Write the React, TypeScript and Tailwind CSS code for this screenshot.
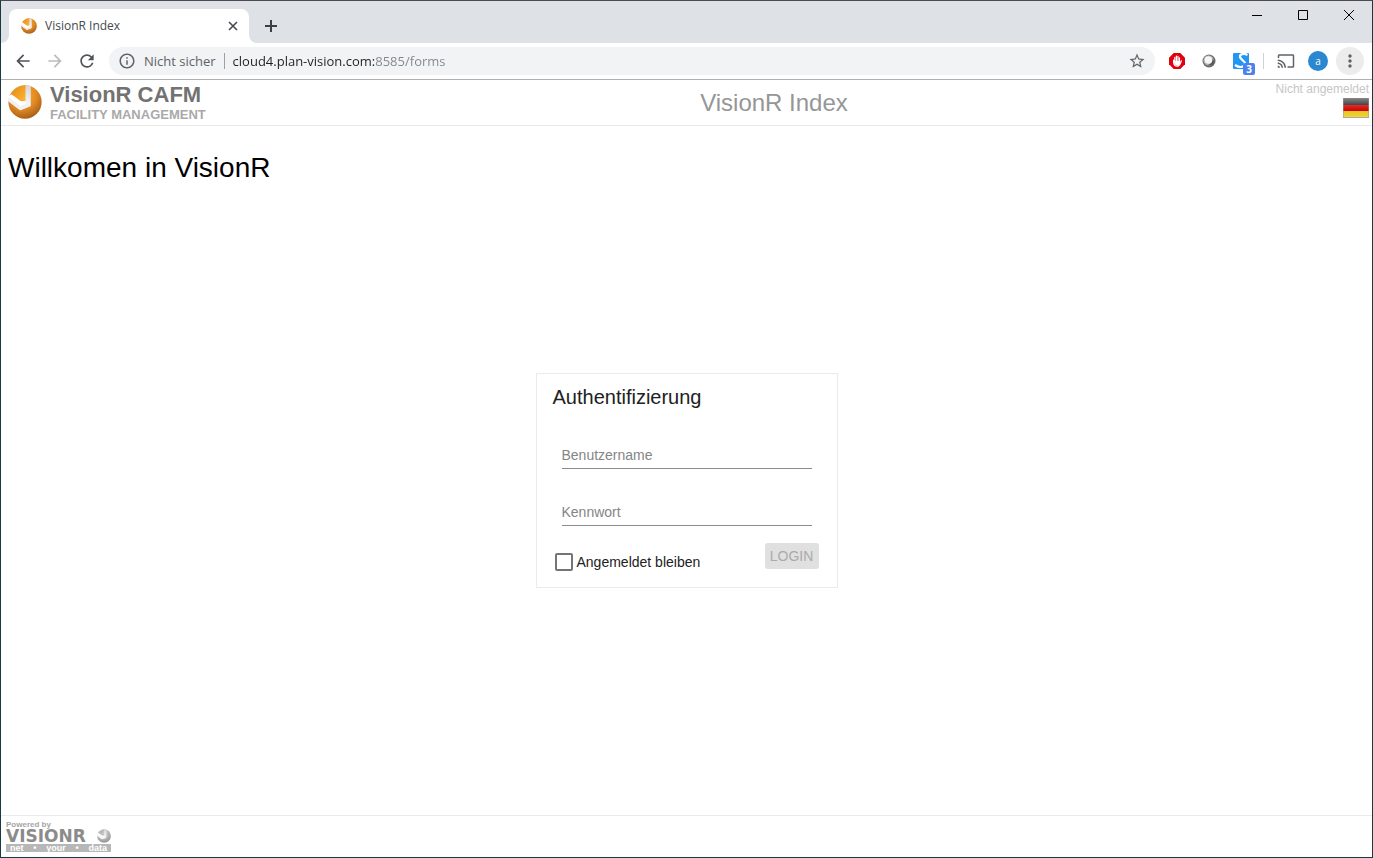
import { useState } from "react";
import { MdArrowBack, MdArrowForward, MdRefresh, MdInfoOutline, MdStarBorder, MdCast, MdMoreVert } from "react-icons/md";

function Sphere({ id, className, gray = false }: { id: string; className: string; gray?: boolean }) {
  const shades = gray ? ["#e2e2e2", "#b5b5b5", "#8f8f8f"] : ["#ffac2a", "#e28b22", "#a1591a"];
  return (
    <svg viewBox="0 0 100 100" className={className} aria-hidden="true">
      <defs>
        <radialGradient id={id} cx="0.42" cy="0.3" r="0.75">
          <stop offset="0" stopColor={shades[0]} />
          <stop offset="0.55" stopColor={shades[1]} />
          <stop offset="1" stopColor={shades[2]} />
        </radialGradient>
        <linearGradient id={id + "-band"} x1="0" y1="0" x2="0" y2="1">
          <stop offset="0" stopColor="#d6d4dc" />
          <stop offset="1" stopColor="#f8f8fb" />
        </linearGradient>
        <linearGradient id={id + "-wedge"} x1="0" y1="0" x2="1" y2="1">
          <stop offset="0" stopColor={gray ? "#a8a8a8" : "#e08a1c"} />
          <stop offset="1" stopColor={gray ? "#cfcfcf" : "#ffb52e"} />
        </linearGradient>
      </defs>
      <circle cx="50" cy="50" r="49" fill={`url(#${id})`} />
      <path d="M51 0 L67 3 L67 62 L50 58Z" fill={`url(#${id}-band)`} />
      <path d="M0 32 L11 28 L40 48 L51 46 L52 60 L67 62 L36 74 L1 48Z" fill="#ffffff" />
      <path d="M2 36 L36 62 L52 56 L67 62 L36 74 L1 48Z" fill="#f1f0f4" />
      <path d="M11 26 Q26 5 51 1 L51 46 Q42 43 35 46Z" fill={`url(#${id}-wedge)`} />
    </svg>
  );
}

function TabStrip() {
  return (
    <div className="flex h-[42px] items-end justify-between bg-[#dee1e6]">
      <div className="flex items-end">
        <svg viewBox="0 0 8 8" className="size-2" aria-hidden="true">
          <path d="M8 0V8H0A8 8 0 0 0 8 0Z" fill="#fff" />
        </svg>
        <div className="flex h-[34px] w-60 items-center rounded-t-lg bg-white pl-3 pr-2">
          <Sphere id="tab-icon" className="size-4" />
          <span className="ml-2 flex-1 font-['Open_Sans','Noto_Sans',sans-serif] text-[12px] text-[#45494d]">VisionR Index</span>
          <button aria-label="Tab schließen" className="flex size-4 items-center justify-center">
            <svg viewBox="0 0 10 10" className="size-[10px]"><path d="M1 1L9 9M9 1L1 9" stroke="#45494d" strokeWidth="1.6" /></svg>
          </button>
        </div>
        <svg viewBox="0 0 8 8" className="size-2" aria-hidden="true">
          <path d="M0 0V8H8A8 8 0 0 1 0 0Z" fill="#fff" />
        </svg>
        <button aria-label="Neuer Tab" className="flex h-[34px] w-7 items-center justify-center">
          <svg viewBox="0 0 12 12" className="size-3"><path d="M6 0V12M0 6H12" stroke="#3c4043" strokeWidth="2" /></svg>
        </button>
      </div>
      <div className="flex h-7 self-start">
        <button aria-label="Minimieren" className="flex w-[46px] items-center justify-center">
          <svg viewBox="0 0 10 10" className="size-[10px]"><path d="M0 5.5H10" stroke="#000" /></svg>
        </button>
        <button aria-label="Maximieren" className="flex w-[46px] items-center justify-center">
          <svg viewBox="0 0 10 10" className="size-[10px]"><path d="M.5 .5H9.5V9.5H.5Z" fill="none" stroke="#000" /></svg>
        </button>
        <button aria-label="Schließen" className="flex w-[46px] items-center justify-center">
          <svg viewBox="0 0 10 10" className="size-[10px]"><path d="M0 0L10 10M10 0L0 10" stroke="#000" /></svg>
        </button>
      </div>
    </div>
  );
}

function Toolbar() {
  const [url, setUrl] = useState("cloud4.plan-vision.com:8585/forms");
  return (
    <div className="flex h-[37px] items-center border-b border-[#aeb0b2] bg-white pl-3 pr-2 font-['Open_Sans','Noto_Sans',sans-serif]">
      <div className="flex gap-3 text-[20px]">
        <button aria-label="Zurück" className="text-[#505357]"><MdArrowBack /></button>
        <button aria-label="Vorwärts" className="text-[#babcbe]"><MdArrowForward /></button>
        <button aria-label="Neu laden" className="text-[#505357]"><MdRefresh /></button>
      </div>
      <div className="ml-3 flex h-7 flex-1 items-center rounded-full bg-[#f1f3f4] pl-[9px] pr-[9px] text-[13px]">
        <button className="flex items-center gap-2 text-[#5f6368]">
          <MdInfoOutline className="text-[18px]" />
          <span className="whitespace-nowrap pt-0.5">Nicht sicher</span>
        </button>
        <span className="ml-2 h-4 w-px bg-[#9aa0a6]" />
        <input
          aria-label="Adresse"
          value={url}
          onChange={(e) => setUrl(e.target.value)}
          className="ml-2 min-w-0 flex-1 bg-[linear-gradient(to_right,#202124_142px,#80868b_142px)] bg-clip-text pt-0.5 text-transparent caret-black outline-none"
        />
        <button aria-label="Lesezeichen" className="text-[18px] text-[#5f6368]"><MdStarBorder /></button>
      </div>
      <div className="ml-3 flex items-center gap-4">
        <button aria-label="Werbeblocker">
          <svg viewBox="0 0 16 16" className="ml-0.5 size-4">
            <path d="M4.7 0H11.3L16 4.7V11.3L11.3 16H4.7L0 11.3V4.7Z" fill="#e1000f" />
            <path d="M4.6 7V9.6C5 12 6.2 13.2 8 13.2C9.8 13.2 10.8 12 11.5 10L12.4 7.8M5.8 9V4.4M7.4 8V3M9 8V3.4M10.5 9V4.8" fill="none" stroke="#fff" strokeWidth="1.2" strokeLinecap="round" />
            <path d="M5.2 8H11V10.6L9.5 12.5H7L5.2 10.5Z" fill="#fff" />
          </svg>
        </button>
        <button aria-label="Erweiterung">
          <svg viewBox="0 0 16 16" className="size-4">
            <circle cx="8" cy="8" r="6.5" fill="#6a6a6a" />
            <circle cx="7.6" cy="7.4" r="5.2" fill="#b0b0b0" />
            <circle cx="7.4" cy="7" r="3.8" fill="#f6f6f6" />
            <path d="M11.6 6Q12 10.5 7 12Q11.5 13.2 13 8.8Q13 7 11.6 6Z" fill="#505050" />
          </svg>
        </button>
        <button aria-label="Übersetzer">
          <svg viewBox="0 0 22 28" className="h-7 w-[22px]">
            <rect y="6" width="16" height="16" rx="1" fill="#2196f3" />
            <path d="M14.5 8C11 6 6.500 7 7 10C7.500 13 12.500 13.500 12 17C11.500 20.500 6 21 2 18" fill="none" stroke="#fff" strokeWidth="2.200" />
            <rect x="10" y="16" width="12" height="12" rx="2" fill="#4d82ee" />
            <text x="16" y="25.500" textAnchor="middle" fill="#fff" fontSize="10" fontWeight="700" fontFamily="Open Sans, sans-serif">3</text>
          </svg>
        </button>
      </div>
      <span className="ml-2 h-4 w-px bg-[#cfd1d4]" />
      <button aria-label="Streamen" className="ml-[13px] text-[18px] text-[#5f6368]"><MdCast /></button>
      <button aria-label="Profil" className="ml-[13px] flex size-5 items-center justify-center rounded-full bg-[#2a87d0] text-[10px] text-white">a</button>
      <button aria-label="Menü" className="ml-2 flex size-7 items-center justify-center rounded-full bg-[#ececec] text-[20px] text-[#5f6368]"><MdMoreVert /></button>
    </div>
  );
}

function AppHeader() {
  return (
    <header className="flex h-[46px] items-start border-b border-[#eaeaea] px-[3px]">
      <div className="flex w-[201px] shrink-0 items-start gap-2 pl-1 pt-[3px]">
        <Sphere id="brand-icon" className="mt-0.5 size-[34px] shrink-0" />
        <div className="whitespace-nowrap font-bold">
          <div className="text-[22px] leading-6 text-[#727272]">VisionR CAFM</div>
          <div className="text-[13px] leading-4 text-[#a9a9a9]">FACILITY MANAGEMENT</div>
        </div>
      </div>
      <h1 className="flex-1 self-center text-center text-[24px] text-[#969696]">VisionR Index</h1>
      <div className="flex w-[26px] shrink-0 flex-col items-end">
        <span className="whitespace-nowrap text-[12px] leading-[18px] text-[#c6c6c6]">Nicht angemeldet</span>
        <button aria-label="Sprache: Deutsch">
          <svg viewBox="0 0 26 20" className="h-5 w-[26px]">
            <defs>
              <linearGradient id="flag-black" x1="0" y1="0" x2="0" y2="1"><stop offset="0" stopColor="#888" /><stop offset="1" stopColor="#444" /></linearGradient>
              <linearGradient id="flag-red" x1="0" y1="0" x2="0" y2="1"><stop offset="0" stopColor="#e32b2b" /><stop offset="1" stopColor="#c80000" /></linearGradient>
              <linearGradient id="flag-gold" x1="0" y1="0" x2="0" y2="1"><stop offset="0" stopColor="#e8c61c" /><stop offset="1" stopColor="#f0d535" /></linearGradient>
            </defs>
            <rect width="26" height="7" fill="url(#flag-black)" />
            <rect y="7" width="26" height="6" fill="url(#flag-red)" />
            <rect y="13" width="26" height="6" fill="url(#flag-gold)" />
            <path d="M0 19.5H26" stroke="#aaa" />
            <path d="M.5 0V20M25.5 0V20" stroke="#999" strokeOpacity=".5" />
          </svg>
        </button>
      </div>
    </header>
  );
}

function LoginForm() {
  return (
    <form className="w-[302px] border border-[#ebebeb] pb-4 pl-4 pr-[18px] pt-2" onSubmit={(e) => e.preventDefault()}>
      <h3 className="text-[20px] leading-[30px] text-[#212121]">Authentifizierung</h3>
      <div className="mt-8 flex flex-col gap-8 pl-[9px] pr-[7px]">
        <input aria-label="Benutzername" placeholder="Benutzername" className="h-[25px] w-full border-b border-[#8c8c8c] pb-[3px] text-[14px] outline-none placeholder:text-[#858585]" />
        <input aria-label="Kennwort" type="password" placeholder="Kennwort" className="h-[25px] w-full border-b border-[#8c8c8c] pb-[3px] text-[14px] outline-none placeholder:text-[#858585]" />
      </div>
      <div className="mt-[17px] flex items-start justify-between">
        <label className="ml-0.5 mt-2.5 flex items-center gap-1 text-[14px] leading-[18px] text-[#212121]">
          <input type="checkbox" className="size-[18px] appearance-none rounded-[2px] border-2 border-[#757575] checked:bg-[#757575]" />
          Angemeldet bleiben
        </label>
        <button disabled className="h-[26px] w-[54px] rounded-[3px] bg-[#e0e0e0] text-[14px] text-[#ababab]">LOGIN</button>
      </div>
    </form>
  );
}

function Footer() {
  return (
    <footer className="h-[42px] border-t border-[#eaeaea] pl-[5px] pt-1">
      <a href="#visionr" className="block w-[105px] font-['DejaVu_Sans',sans-serif] font-bold">
        <div className="font-['Liberation_Sans',sans-serif] text-[8px] leading-[9px] text-[#a5a5a5]">Powered by</div>
        <div className="flex items-center justify-between text-[17px] leading-[14px] text-[#8b8b8b]">
          VISIONR
          <Sphere id="footer-icon" gray className="size-[14px]" />
        </div>
        <div className="mt-px flex h-2 items-center justify-between bg-[#b7b7b7] px-1 font-['Liberation_Sans',sans-serif] text-[9px] leading-[8px] text-white">
          <span>net</span><span>•</span><span>your</span><span>•</span><span>data</span>
        </div>
      </a>
    </footer>
  );
}

export default function App() {
  return (
    <div className="flex min-h-screen flex-col border border-[#183b43] border-t-[#4b4b50] bg-white font-['Liberation_Sans',Arial,sans-serif]">
      <TabStrip />
      <Toolbar />
      <AppHeader />
      <main className="flex flex-1 flex-col">
        <h2 className="px-[7px] pt-6 text-[28px] leading-9 text-black">Willkomen in VisionR</h2>
        <div className="flex flex-1 justify-center pt-[187px]">
          <div><LoginForm /></div>
        </div>
      </main>
      <Footer />
    </div>
  );
}
